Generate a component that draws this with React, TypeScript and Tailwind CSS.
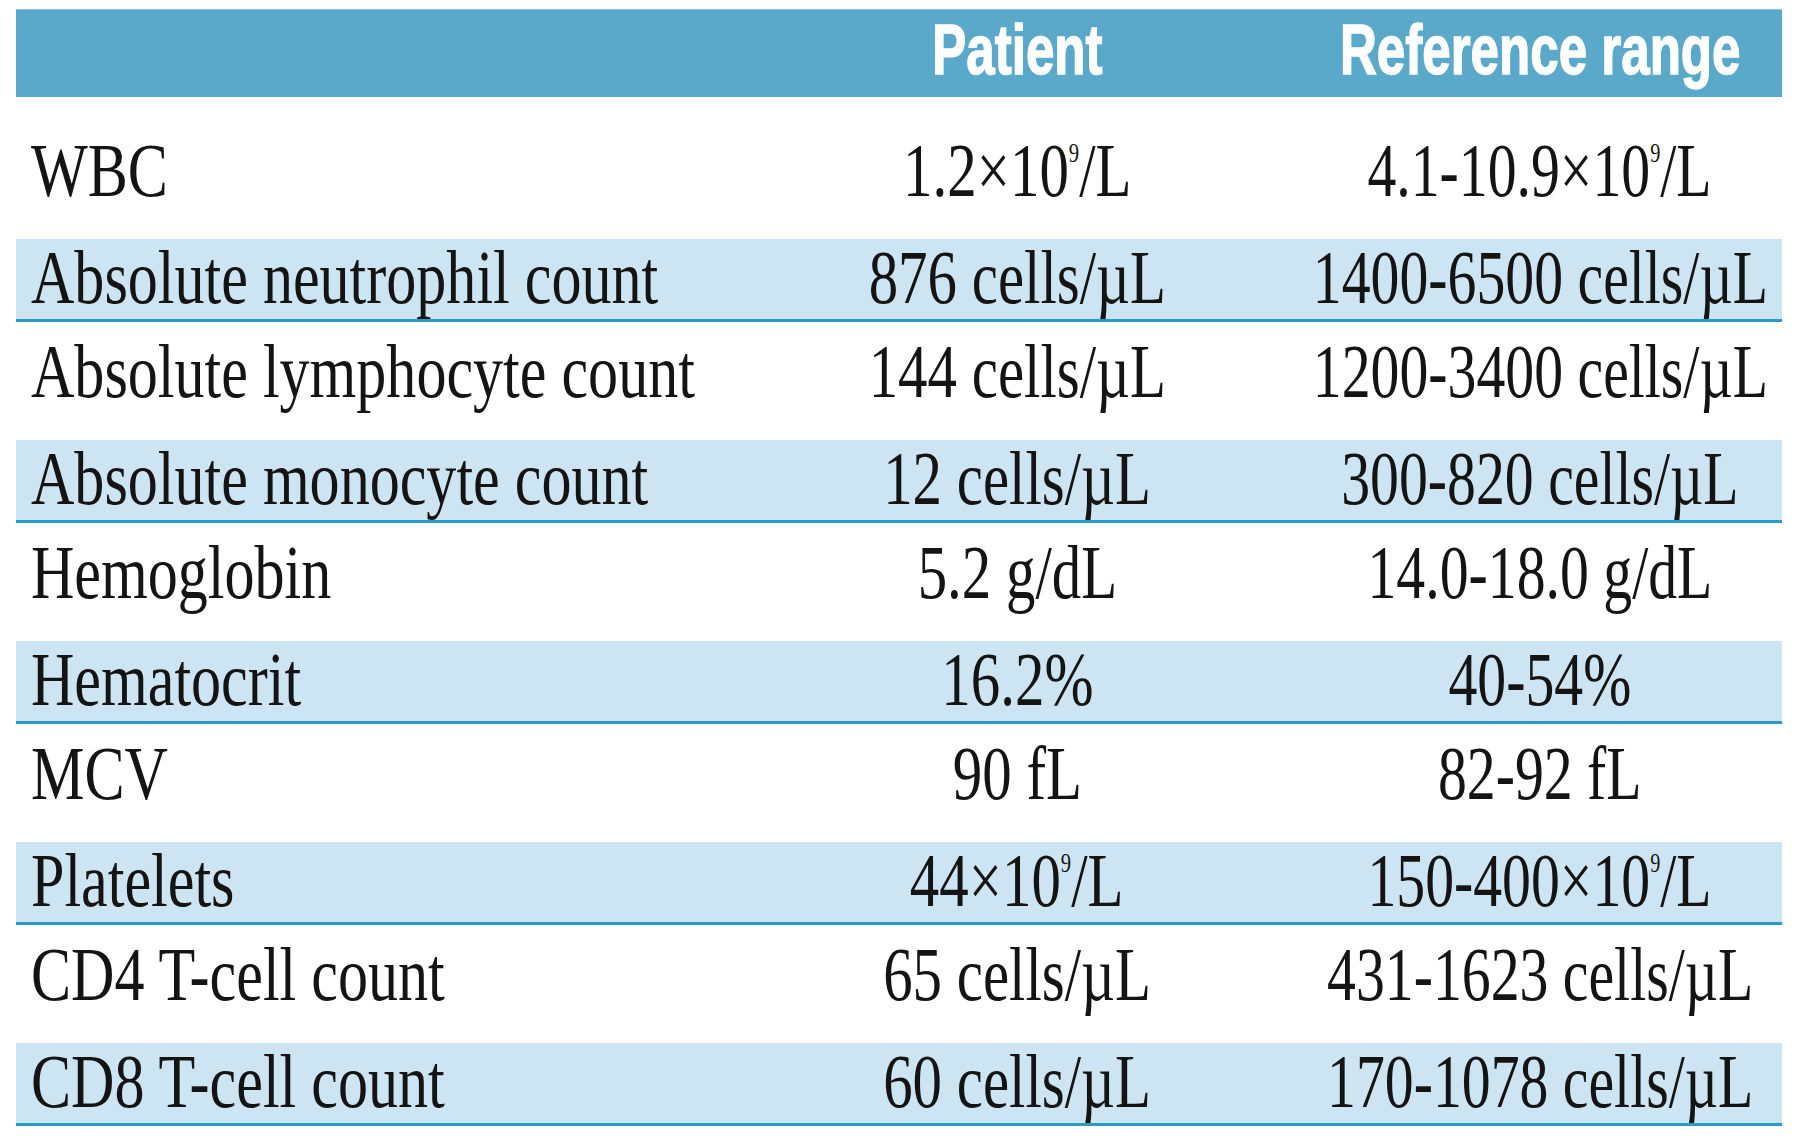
import React from "react";

type Row = { label: string; patient: React.ReactNode; ref: React.ReactNode };

const Sup = () => (
  <sup className="text-[27px] leading-none top-[-34px]">9</sup>
);

const rows: Row[] = [
  { label: "WBC", patient: <>1.2×10<Sup />/L</>, ref: <>4.1-10.9×10<Sup />/L</> },
  { label: "Absolute neutrophil count", patient: "876 cells/µL", ref: "1400-6500 cells/µL" },
  { label: "Absolute lymphocyte count", patient: "144 cells/µL", ref: "1200-3400 cells/µL" },
  { label: "Absolute monocyte count", patient: "12 cells/µL", ref: "300-820 cells/µL" },
  { label: "Hemoglobin", patient: "5.2 g/dL", ref: "14.0-18.0 g/dL" },
  { label: "Hematocrit", patient: "16.2%", ref: "40-54%" },
  { label: "MCV", patient: "90 fL", ref: "82-92 fL" },
  { label: "Platelets", patient: <>44×10<Sup />/L</>, ref: <>150-400×10<Sup />/L</> },
  { label: "CD4 T-cell count", patient: "65 cells/µL", ref: "431-1623 cells/µL" },
  { label: "CD8 T-cell count", patient: "60 cells/µL", ref: "170-1078 cells/µL" },
];

export default function App() {
  return (
    <div className="w-[1800px] h-[1139px] bg-white overflow-hidden pt-[9px] pl-[16px]">
      <div className="w-[1766px] [font-family:'Liberation_Serif','Times_New_Roman',serif] text-[77px] leading-none text-[#141414]">
        <div className="grid grid-cols-[720px_562px_484px] h-[88px] bg-[#5aa9ca] border-t border-[#8cc6dd] [font-family:'Liberation_Sans',Arial,sans-serif] font-bold text-[71px] text-white [-webkit-text-stroke:1.5px_white]">
          <div />
          <div className="flex items-center justify-center pb-2">
            <span className="inline-block scale-x-[0.72] whitespace-nowrap">Patient</span>
          </div>
          <div className="flex items-center justify-center pb-2">
            <span className="inline-block scale-x-[0.72] whitespace-nowrap">Reference range</span>
          </div>
        </div>
        <div className="h-[24px]" />
        {rows.map((r, i) => {
          const band = i % 2 === 1;
          return (
            <div
              key={r.label}
              className={
                band
                  ? "grid grid-cols-[720px_562px_484px] h-[83px] bg-[#cde5f2] border-b-[3px] border-[#2b9bc5] pb-5"
                  : "grid grid-cols-[720px_562px_484px] h-[118px] pb-5"
              }
            >
              <div className="flex items-center pl-[15px]">
                <span className="inline-block origin-left scale-x-[0.78] whitespace-nowrap">{r.label}</span>
              </div>
              <div className="flex items-center justify-center">
                <span className="inline-block scale-x-[0.765] whitespace-nowrap">{r.patient}</span>
              </div>
              <div className="flex items-center justify-center">
                <span className="inline-block scale-x-[0.75] whitespace-nowrap">{r.ref}</span>
              </div>
            </div>
          );
        })}
      </div>
    </div>
  );
}
